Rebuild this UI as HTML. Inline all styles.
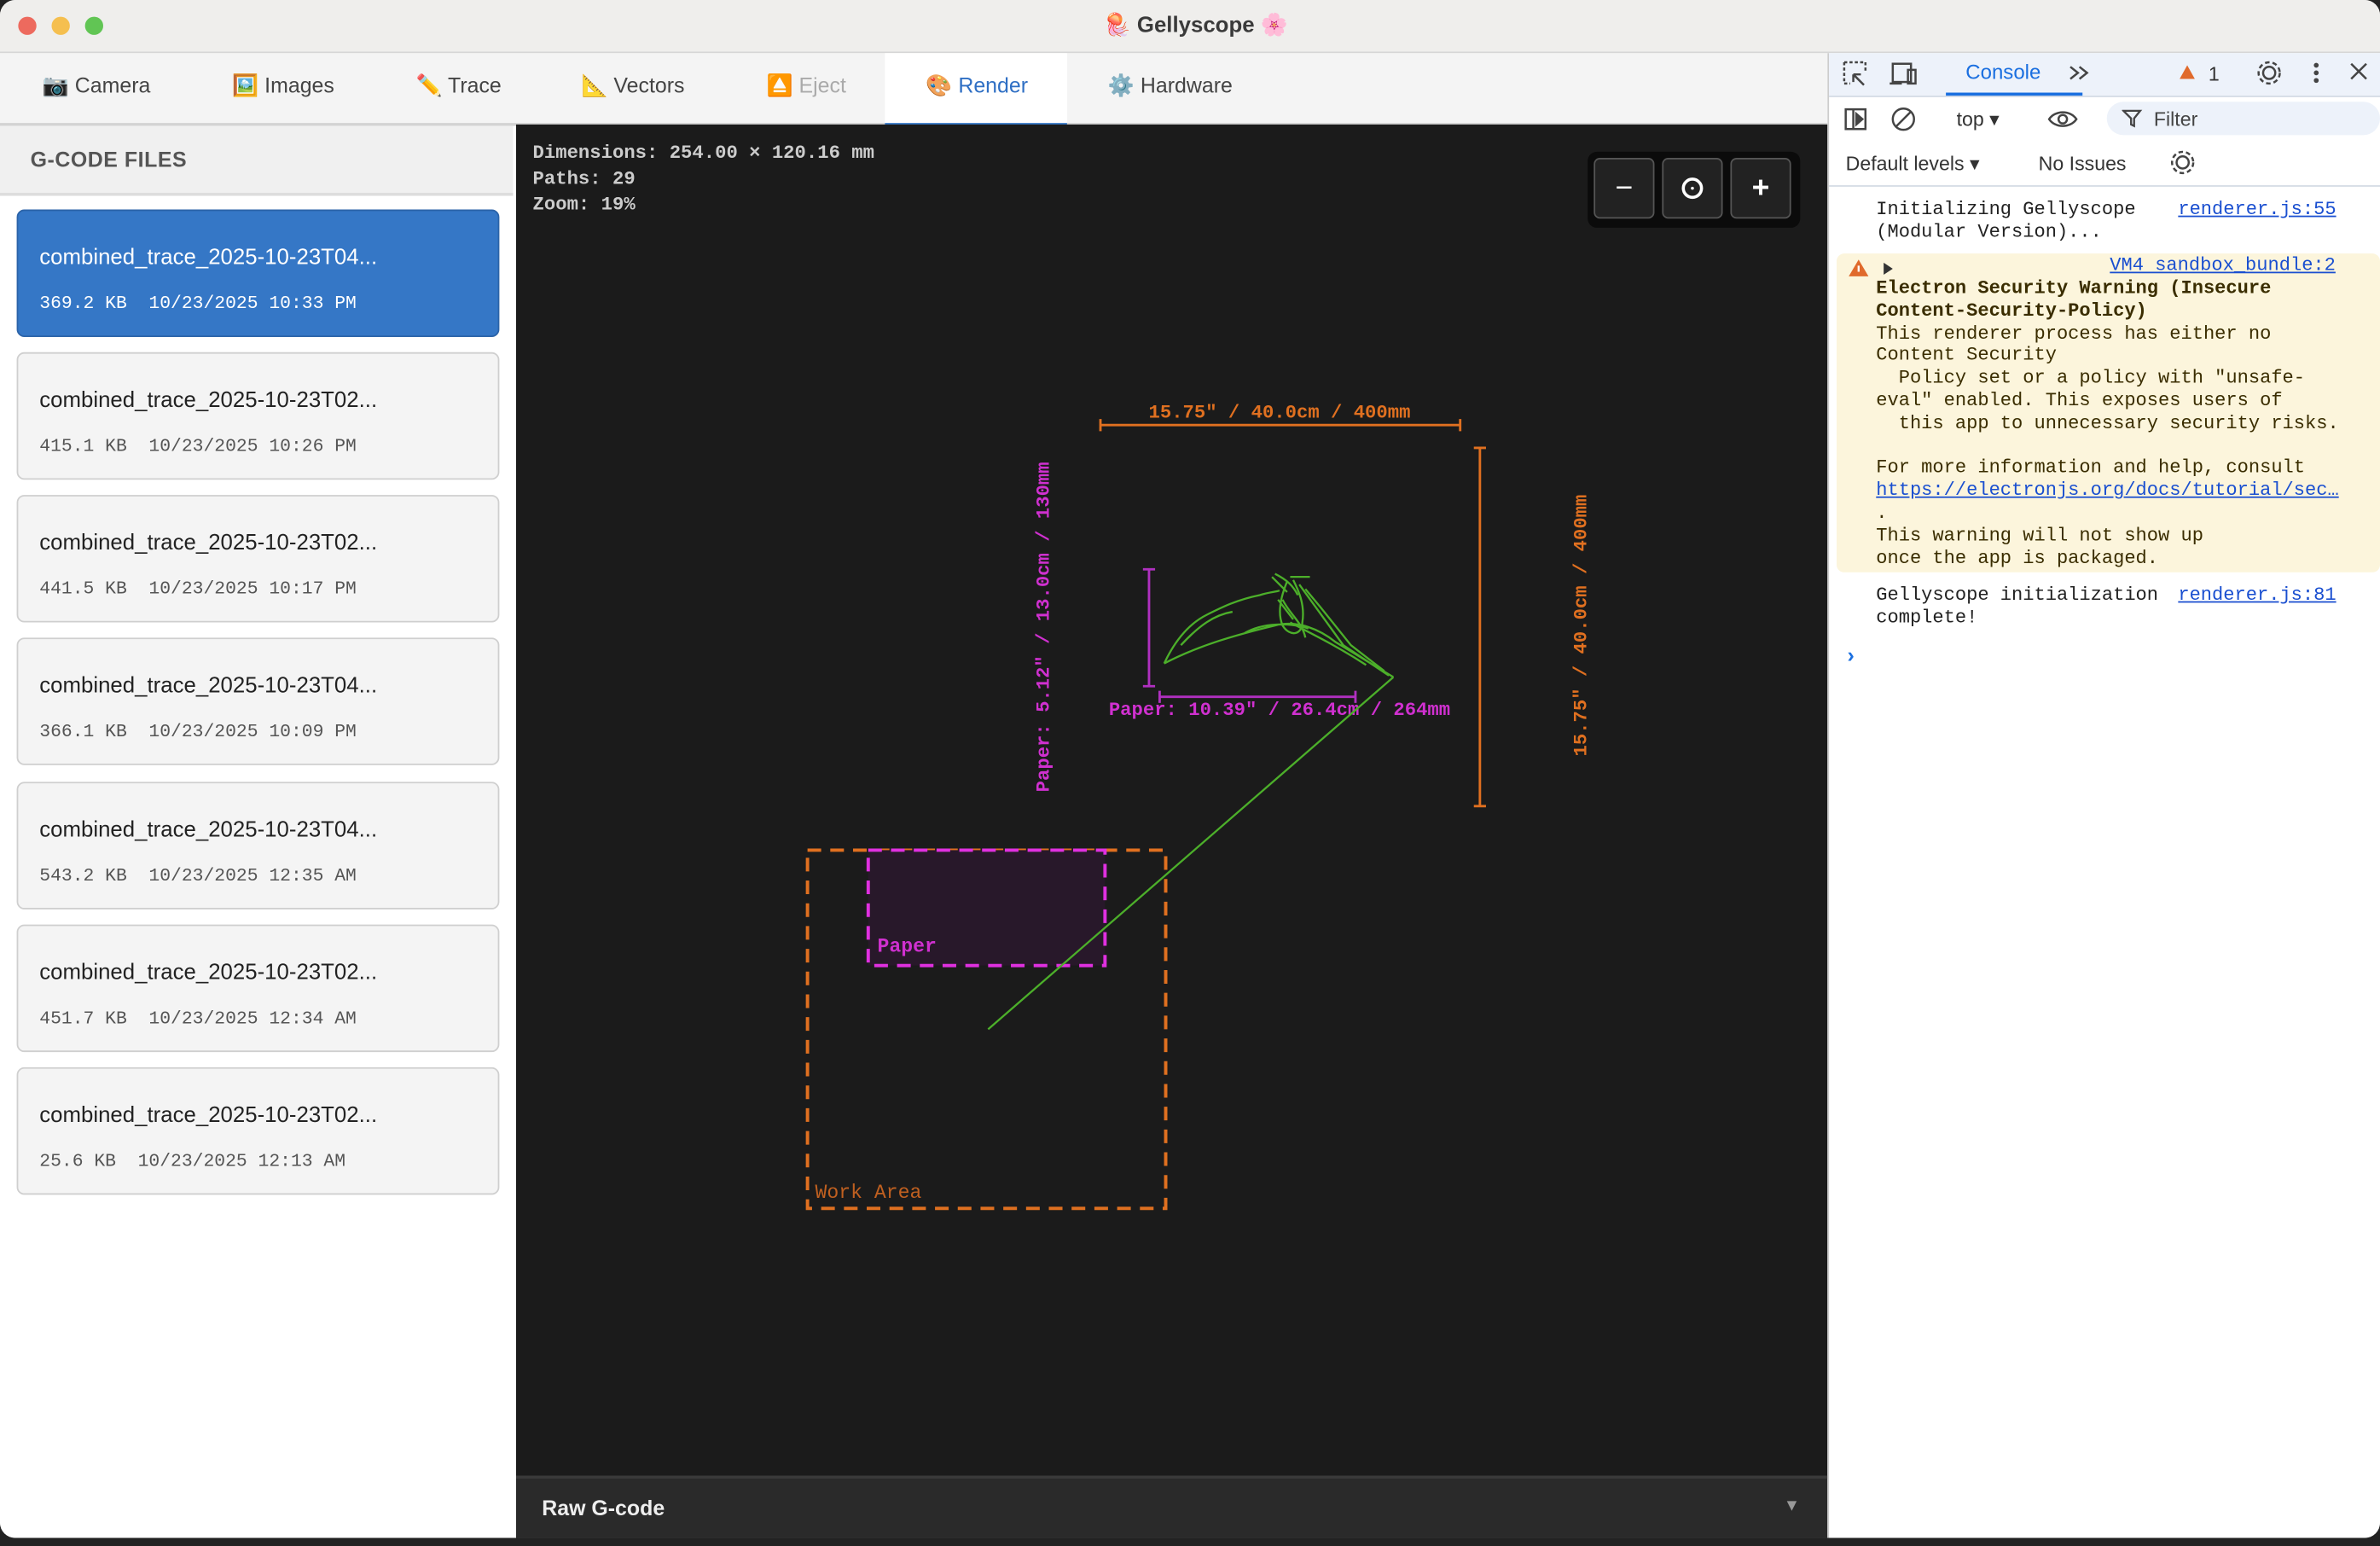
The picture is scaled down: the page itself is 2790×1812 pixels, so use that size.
<!DOCTYPE html>
<html><head><meta charset="utf-8"><style>
html,body{margin:0;padding:0;width:2790px;height:1812px;overflow:hidden;background:#222;}
#w{position:absolute;left:0;top:0;width:1568px;height:1018px;transform:scale(1.779337);transform-origin:0 0;font-family:"Liberation Sans","Noto Sans CJK JP",sans-serif;}
.a{position:absolute;}
.mono{font-family:"Liberation Mono","DejaVu Sans Mono",monospace;}
.tab{position:absolute;top:48px;font-size:14px;color:#444;}
.card{position:absolute;left:11px;width:316px;height:82px;background:#f4f4f4;border:1px solid #cfcfcf;border-radius:5px;}
.card .n{position:absolute;left:14px;top:23px;font-size:14.5px;color:#222;}
.card .m{position:absolute;left:14px;top:54px;font-size:12px;color:#555;font-family:"Liberation Mono",monospace;white-space:pre;}
.dt{font-family:"Liberation Mono","DejaVu Sans Mono",monospace;font-size:12.4px;line-height:14.8px;color:#222;}
.lk{color:#1a4fd0;text-decoration:underline;}
</style></head><body><div id="w">
<div class="a" style="left:0;top:0;width:1568px;height:1013px;background:#fff;border-radius:10px;overflow:hidden;">
 <div class="a" style="left:0;top:0;width:1568px;height:34px;background:#efeeec;border-bottom:1px solid #d6d6d6;"></div>
 <div class="a" style="left:12px;top:11px;width:12px;height:12px;border-radius:6px;background:#ed6a5e;"></div>
 <div class="a" style="left:34px;top:11px;width:12px;height:12px;border-radius:6px;background:#f5bf4f;"></div>
 <div class="a" style="left:56px;top:11px;width:12px;height:12px;border-radius:6px;background:#61c554;"></div>
 <div class="a" style="left:727px;top:8px;font-size:14.5px;font-weight:bold;color:#3a3a3a;"><span style="color:#3b8be0">🪼</span> Gellyscope <span style="color:#f08cb0">🌸</span></div>
 <div class="a" style="left:0;top:35px;width:1204px;height:46px;background:#f4f4f4;border-bottom:2px solid #d3d3d3;"></div>
 <div class="a" style="left:583px;top:35px;width:120px;height:46px;background:#fff;border-bottom:3px solid #3577c6;"></div>
 <div class="tab" style="left:28px">📷 Camera</div>
 <div class="tab" style="left:153px">🖼️ Images</div>
 <div class="tab" style="left:274px">✏️ Trace</div>
 <div class="tab" style="left:383px">📐 Vectors</div>
 <div class="tab" style="left:505px;color:#aaa">⏏️ Eject</div>
 <div class="tab" style="left:610px;color:#2f6fc4">🎨 Render</div>
 <div class="tab" style="left:730px">⚙️ Hardware</div>
 <div class="a" style="left:0;top:83px;width:340px;height:930px;background:#fff;border-right:1px solid #ddd;"></div>
 <div class="a" style="left:0;top:83px;width:338px;height:44px;background:#f0f0f0;border-bottom:2px solid #ddd;"></div>
 <div class="a" style="left:20px;top:97px;font-size:14px;font-weight:bold;color:#555;letter-spacing:0.3px;">G-CODE FILES</div>
 <div class="card" style="top:138px;background:#3577c6;border-color:#2b63a8;"><div class="n" style="color:#fff">combined_trace_2025-10-23T04...</div><div class="m" style="color:#fff">369.2 KB  10/23/2025 10:33 PM</div></div>
 <div class="card" style="top:232px"><div class="n">combined_trace_2025-10-23T02...</div><div class="m">415.1 KB  10/23/2025 10:26 PM</div></div>
 <div class="card" style="top:326px"><div class="n">combined_trace_2025-10-23T02...</div><div class="m">441.5 KB  10/23/2025 10:17 PM</div></div>
 <div class="card" style="top:420px"><div class="n">combined_trace_2025-10-23T04...</div><div class="m">366.1 KB  10/23/2025 10:09 PM</div></div>
 <div class="card" style="top:515px"><div class="n">combined_trace_2025-10-23T04...</div><div class="m">543.2 KB  10/23/2025 12:35 AM</div></div>
 <div class="card" style="top:609px"><div class="n">combined_trace_2025-10-23T02...</div><div class="m">451.7 KB  10/23/2025 12:34 AM</div></div>
 <div class="card" style="top:703px"><div class="n">combined_trace_2025-10-23T02...</div><div class="m">25.6 KB  10/23/2025 12:13 AM</div></div>
 <div class="a" style="left:340px;top:82px;width:864px;height:890px;background:#1b1b1b;"></div>
 <div class="a mono" style="left:351px;top:93px;font-size:12.5px;line-height:17px;color:#ccc;font-weight:bold;">Dimensions: 254.00 × 120.16 mm<br>Paths: 29<br>Zoom: 19%</div>
 <div class="a" style="left:1046px;top:100px;width:140px;height:50px;background:#0b0b0b;border-radius:6px;"></div>
 <div class="a" style="left:1050px;top:104px;width:40px;height:40px;background:#222;border:1px solid #555;border-radius:4px;box-sizing:border-box;color:#fff;font-size:20px;text-align:center;line-height:38px;">−</div>
 <div class="a" style="left:1095px;top:104px;width:40px;height:40px;background:#222;border:1px solid #555;border-radius:4px;box-sizing:border-box;"><div class="a" style="left:12px;top:12px;width:10px;height:10px;border:2px solid #fff;border-radius:50%;"></div><div class="a" style="left:18px;top:18px;width:2px;height:2px;background:#fff;border-radius:1px;"></div></div>
 <div class="a" style="left:1140px;top:104px;width:40px;height:40px;background:#222;border:1px solid #555;border-radius:4px;box-sizing:border-box;color:#fff;font-size:20px;font-weight:bold;text-align:center;line-height:38px;">+</div>
 <svg class="a" style="left:0;top:0" width="1568" height="1018" viewBox="0 0 1568 1018">
  <g stroke="#e07020" stroke-width="1.6" fill="none">
   <path d="M725 280H962M725 276V284M962 276V284"/>
   <path d="M975 295V531M971 295H979M971 531H979"/>
   <rect x="532" y="560" width="236" height="236" stroke-dasharray="9 6" stroke-width="2.2"/>
  </g>
  <rect x="572" y="560" width="156" height="76" fill="#28182a" stroke="#e030e0" stroke-width="2.2" stroke-dasharray="9 6"/>
  <g stroke="#b030c0" stroke-width="1.6" fill="none">
   <path d="M757 375V452M753 375H761M753 452H761"/>
   <path d="M764 459H893M764 455V463M893 455V463"/>
  </g>
  <g font-family="Liberation Mono,monospace" font-weight="bold" font-size="12.5">
   <text x="843" y="275" fill="#e07020" text-anchor="middle">15.75" / 40.0cm / 400mm</text>
   <text transform="translate(1045 412) rotate(-90)" fill="#e07020" text-anchor="middle">15.75" / 40.0cm / 400mm</text>
   <text transform="translate(691 413) rotate(-90)" fill="#d030d0" text-anchor="middle">Paper: 5.12" / 13.0cm / 130mm</text>
   <text x="843" y="471" fill="#d030d0" text-anchor="middle">Paper: 10.39" / 26.4cm / 264mm</text>
   <text x="578" y="627" fill="#d030d0" font-size="13">Paper</text>
   <text x="537" y="789" fill="#c06020" font-size="13" font-weight="normal">Work Area</text>
  </g>
  <g stroke="#4caf2a" fill="none" stroke-width="1.3">
   <path d="M651 678L918 446"/>
   <path d="M767 437C775 420 785 410 795 405C805 400 815 395 830 392C836 390 840 390 843 389M767 437C790 425 815 418 840 412C855 408 870 415 880 423C895 432 908 440 918 446M840 378C848 382 852 386 855 392M848 383C843 395 842 405 845 412C850 420 858 418 858 410C860 398 855 388 852 382M856 385L885 425L915 445M820 417C832 410 850 410 862 414M850 380L863 380"/>
   <path d="M778 425C790 412 800 405 812 403M842 395L852 408M838 380L848 390M845 395C850 405 858 410 860 420M850 410C865 418 880 425 900 438M860 388L870 400L890 425L912 442"/>
  </g>
 </svg>
 <div class="a" style="left:340px;top:972px;width:864px;height:41px;background:#2a2a2a;border-top:2px solid #3a3a3a;box-sizing:border-box;"></div>
 <div class="a" style="left:357px;top:985px;font-size:14px;font-weight:bold;color:#eee;">Raw G-code</div>
 <div class="a" style="left:1175px;top:986px;font-size:11px;color:#999;">▼</div>
 <div class="a" style="left:1204px;top:35px;width:364px;height:978px;background:#fff;border-left:1px solid #ccc;"></div>
 <div class="a" style="left:1205px;top:35px;width:363px;height:28px;background:#edf2fa;border-bottom:1px solid #d5dbe5;"></div>
 <svg class="a" style="left:1205px;top:35px" width="363" height="90" viewBox="0 0 363 90">
  <g fill="none" stroke="#444" stroke-width="1.4">
   <path d="M10 6h14v6M10 6v14M10 20h4" stroke-dasharray="2 1.5"/><path d="M16 14l7 7M16 14h5M16 14v5"/>
   <rect x="42" y="7" width="12" height="12"/><path d="M40 20h8M52 11h5v9h-5z"/>
   <path d="M159 9l5 4-5 4M165 9l5 4-5 4"/>
   <circle cx="290" cy="13" r="4"/><circle cx="290" cy="13" r="7" stroke-dasharray="3 2"/>
   <path d="M344 7l10 10M354 7l-10 10"/>
   <rect x="11" y="37" width="13" height="13"/><path d="M16 37v13"/><path d="M18 40l4 3.5-4 3.5z" fill="#444"/>
   <circle cx="49" cy="43.5" r="7"/><path d="M44 48.5l10-10"/>
   <path d="M145 43.5c4-6 14-6 18 0c-4 6-14 6-18 0z"/><circle cx="154" cy="43.5" r="2.8"/>
   <circle cx="233" cy="72" r="4"/><circle cx="233" cy="72" r="7" stroke-dasharray="3 2"/>
  </g>
  <path d="M231 17l5-9 5 9z" fill="#e06a2c"/>
  <circle cx="321" cy="8" r="1.6" fill="#444"/><circle cx="321" cy="13" r="1.6" fill="#444"/><circle cx="321" cy="18" r="1.6" fill="#444"/>
  <rect x="77" y="26" width="90" height="2" fill="#1a6fe0"/>
 </svg>
 <div class="a" style="left:1295px;top:40px;font-size:13.5px;color:#1a6fe0;">Console</div>
 <div class="a" style="left:1455px;top:41px;font-size:13px;color:#333;">1</div>
 <div class="a" style="left:1289px;top:71px;font-size:13px;color:#333;">top ▾</div>
 <div class="a" style="left:1388px;top:67px;width:180px;height:22px;background:#edf2fa;border-radius:11px;"></div>
 <svg class="a" style="left:1398px;top:71px" width="14" height="14"><path d="M1 2h11l-4 5v5l-2-1v-4z" fill="none" stroke="#444" stroke-width="1.3"/></svg>
 <div class="a" style="left:1419px;top:71px;font-size:13px;color:#444;">Filter</div>
 <div class="a" style="left:1216px;top:100px;font-size:13px;color:#333;">Default levels ▾</div>
 <div class="a" style="left:1343px;top:100px;font-size:13px;color:#333;">No Issues</div>
 <div class="a" style="left:1205px;top:122px;width:363px;height:1px;background:#d5dbe5;"></div>
 <div class="a dt" style="left:1236px;top:131px;">Initializing Gellyscope<br>(Modular Version)...</div>
 <div class="a dt lk" style="left:1435px;top:131px;">renderer.js:55</div>
 <div class="a" style="left:1210px;top:167px;width:358px;height:210px;background:#fcf5dc;border-radius:5px;"></div>
 <svg class="a" style="left:1217px;top:170px" width="40" height="14"><path d="M1 12l6.5-11 6.5 11z" fill="#e06a2c"/><path d="M7.5 5v4" stroke="#fff" stroke-width="1.3"/><path d="M24 3l6 4-6 4z" fill="#333"/></svg>
 <div class="a dt lk" style="left:1390px;top:168px;">VM4 sandbox_bundle:2</div>
 <div class="a dt" style="left:1236px;top:183px;white-space:pre;color:#3a2d00"><b>Electron Security Warning (Insecure
Content-Security-Policy)</b>
This renderer process has either no
Content Security
  Policy set or a policy with "unsafe-
eval" enabled. This exposes users of
  this app to unnecessary security risks.

For more information and help, consult
<span class="lk">https://electronjs.org/docs/tutorial/sec…</span>
.
This warning will not show up
once the app is packaged.</div>
 <div class="a dt" style="left:1236px;top:385px;">Gellyscope initialization<br>complete!</div>
 <div class="a dt lk" style="left:1435px;top:385px;">renderer.js:81</div>
 <div class="a" style="left:1217px;top:423px;font-size:14px;color:#1a6fe0;font-weight:bold;">›</div>
</div>
</div></body></html>
